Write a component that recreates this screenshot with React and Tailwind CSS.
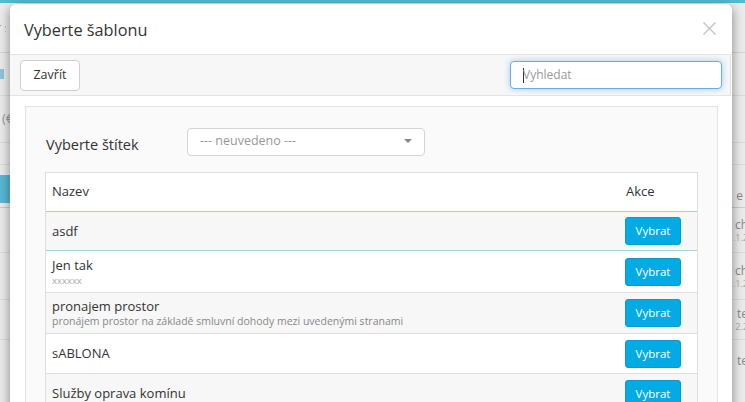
import React from "react";

const rows = [
  { name: "asdf", sub: null, h: "h-[39px]", bg: "bg-[#f7f7f7]", border: "border-b border-[#a9cde2]" },
  { name: "Jen tak", sub: "xxxxxx", subCls: "text-[9.5px] text-[#aaa]", h: "h-[42px]", bg: "bg-white", border: "border-b border-[#dedede]" },
  { name: "pronajem prostor", sub: "pronájem prostor na základě smluvní dohody mezi uvedenými stranami", subCls: "text-[10.5px] text-[#888]", h: "h-[41px]", bg: "bg-[#f7f7f7]", border: "border-b border-[#dedede]" },
  { name: "sABLONA", sub: null, h: "h-[40px]", bg: "bg-white", border: "border-b border-[#dedede]" },
  { name: "Služby oprava komínu", sub: null, h: "h-[40px]", bg: "bg-[#f7f7f7]", border: "border-b border-[#dedede]" },
];

function RightCell({ top, bottom }) {
  return (
    <div className="flex flex-col items-end mr-[-3px] w-[14px] overflow-hidden">
      <div className="h-[15px] text-[12px] leading-[15px] text-[#888] whitespace-nowrap">{top}</div>
      {bottom && <div className="h-[12px] text-[9px] leading-[12px] text-[#aaa] whitespace-nowrap">{bottom}</div>}
    </div>
  );
}

function BgPage() {
  return (
    <div className="flex flex-col w-full h-full bg-[#ececec] text-[#9a9a9a] text-[13px]">
      <div className="h-[3px] bg-[#58b9d9]" />
      <div className="flex justify-between h-[50px] border-b border-[#d6d6d6] items-center">
        <span className="ml-[-4px] w-[10px] overflow-hidden whitespace-nowrap">r s</span>
        <span />
      </div>
      <div className="flex justify-between h-[43px] border-b border-[#dcdcdc] items-center">
        <span className="w-[4px] h-[10px] bg-[#8fc4dc]" />
        <span />
      </div>
      <div className="flex justify-between h-[47px] border-b border-[#dcdcdc] items-center">
        <span className="ml-[2px] w-[8px] overflow-hidden whitespace-nowrap">(€</span>
        <span />
      </div>
      <div className="flex justify-between h-[22px] border-b border-[#dcdcdc]" />
      <div className="h-[10px]" />
      <div className="flex justify-between h-[28px]">
        <span className="w-[10px] bg-[#5ab8d6]" />
        <span className="self-end mr-[2px] text-[12px] text-[#888] leading-[15px]">e</span>
      </div>
      <div className="flex justify-between h-[5px] border-b border-[#b7d3e2]" />
      <div className="flex justify-between h-[45px] border-b border-[#dcdcdc] items-center">
        <span />
        <RightCell top="ich" bottom=".1.2" />
      </div>
      <div className="flex justify-between h-[47px] border-b border-[#dcdcdc] items-center">
        <span />
        <RightCell top="ich" bottom=".1.2" />
      </div>
      <div className="flex justify-between h-[40px] border-b border-[#dcdcdc] items-center">
        <span />
        <RightCell top="te" bottom="2.2" />
      </div>
      <div className="flex justify-between h-[40px] items-center">
        <span />
        <RightCell top="te" />
      </div>
    </div>
  );
}

export default function App() {
  return (
    <div className="relative w-[745px] h-[402px] overflow-hidden font-['Open_Sans',sans-serif]">
      <BgPage />
      <div className="absolute left-[10px] top-[4px] w-[722px] h-[440px] bg-white rounded-[6px] shadow-[0_3px_12px_rgba(0,0,0,0.45)] flex flex-col">
        <div className="h-[51px] flex items-center justify-between pl-[14px] pr-[16px] border-b border-[#e5e5e5]">
          <span className="text-[16.3px] text-[#333] leading-none mt-[2px]">Vyberte šablonu</span>
          <svg width="13" height="13" viewBox="0 0 13 13" className="mt-[-2px]">
            <path d="M0.5 0.5 L12.5 12.5 M12.5 0.5 L0.5 12.5" stroke="#c4c4c4" strokeWidth="1.4" />
          </svg>
        </div>
        <div className="h-[41px] bg-[#f7f7f7] border-b border-r border-[#e3e3e3] flex items-center justify-between pl-[10px] pr-[8px] mr-[1px]">
          <button className="h-[31px] w-[60px] bg-white border border-[#cfcfcf] rounded-[4px] text-[12.5px] text-[#333]">
            Zavřít
          </button>
          <div className="w-[212px] h-[28px] bg-white border border-[#66afe9] rounded-[4px] shadow-[0_0_6px_rgba(102,175,233,0.6)] flex items-center pl-[12px] text-[12px] text-[#999]">
            <span className="w-px h-[15px] bg-[#333]" />
            <span className="ml-[-1px]">Vyhledat</span>
          </div>
        </div>
        <div className="pt-[10px] pl-[15px] pr-[14px]">
          <div className="border border-[#e3e3e3] bg-[#fafafa] px-[19px] pt-[21px]">
            <div className="flex items-center h-[27px]">
              <span className="w-[142px] pl-[1px] text-[14.5px] text-[#333] mt-[7px]">Vyberte štítek</span>
              <div className="w-[238px] h-[28px] bg-white border border-[#d4d4d4] rounded-[4px] flex items-center justify-between pl-[12px] pr-[12px] text-[12.5px] text-[#999]">
                <span>--- neuvedeno ---</span>
                <svg width="8" height="5" viewBox="0 0 8 5">
                  <path d="M0 0 L8 0 L4 4 Z" fill="#888" />
                </svg>
              </div>
            </div>
            <div className="mt-[17px] bg-white border-l border-r border-t border-[#dedede]">
              <div className="flex h-[39px] items-center border-b border-[#a9cde2] text-[13px] text-[#333]">
                <div className="flex-1 pl-[6px]">Nazev</div>
                <div className="w-[77px] pl-[6px]">Akce</div>
              </div>
              {rows.map((r) => (
                <div key={r.name} className={`flex items-center ${r.h} ${r.bg} ${r.border}`}>
                  <div className="flex-1 pl-[6px] flex flex-col">
                    <span className="text-[13px] font-medium text-[#333] leading-[17px]">{r.name}</span>
                    {r.sub && <span className={`${r.subCls} leading-[13px]`}>{r.sub}</span>}
                  </div>
                  <div className="w-[77px] pl-[5px]">
                    <button className="w-[56px] h-[28px] bg-[#03abe4] border border-[#0b9acb] rounded-[3px] text-white text-[11.5px]">
                      Vybrat
                    </button>
                  </div>
                </div>
              ))}
            </div>
          </div>
        </div>
      </div>
    </div>
  );
}
